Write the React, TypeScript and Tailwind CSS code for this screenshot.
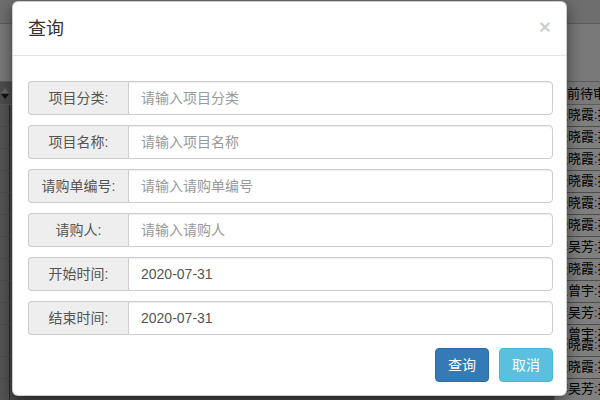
type BgRow = { lines: string[]; h: number };

const tableRows: BgRow[] = [
  { lines: ["张晓霞:提交"], h: 22 },
  { lines: ["张晓霞:提交"], h: 22 },
  { lines: ["张晓霞:提交"], h: 22 },
  { lines: ["张晓霞:提交"], h: 22 },
  { lines: ["张晓霞:提交"], h: 22 },
  { lines: ["张晓霞:提交"], h: 22 },
  { lines: ["李吴芳:提交"], h: 22 },
  { lines: ["张晓霞:提交"], h: 22 },
  { lines: ["王曾宇:提交"], h: 22 },
  { lines: ["李吴芳:提交"], h: 22 },
  { lines: ["王曾宇:提交", "张晓霞:提交"], h: 32 },
  { lines: ["张晓霞:提交"], h: 22 },
  { lines: ["李吴芳:提交"], h: 22 },
];

const fields = [
  { label: "项目分类:", placeholder: "请输入项目分类", value: "" },
  { label: "项目名称:", placeholder: "请输入项目名称", value: "" },
  { label: "请购单编号:", placeholder: "请输入请购单编号", value: "" },
  { label: "请购人:", placeholder: "请输入请购人", value: "" },
  { label: "开始时间:", placeholder: "", value: "2020-07-31" },
  { label: "结束时间:", placeholder: "", value: "2020-07-31" },
];

function CellText({ text }: { text: string }) {
  const [name, rest] = text.split(":");
  return (
    <span className="whitespace-nowrap">
      {name}
      <span className="text-[#c00000]">:</span>
      {rest}
    </span>
  );
}

function BackgroundPage() {
  return (
    <div className="flex h-full w-full flex-col bg-white text-[13px] text-black">
      <div className="h-[24px] shrink-0 border-b border-[#bbbbbb] bg-[#dcdcdc]" />
      <div className="h-[57px] shrink-0 bg-[#f3f3f3]" />

      {/* table under the modal */}
      <div className="flex h-[24px] shrink-0 border-y border-[#b5b5b5] bg-[#f5f5f5]">
        <div className="flex w-[10px] flex-col items-center justify-center gap-[1px] bg-[#9a9a9a]">
          <svg width="8" height="5" viewBox="0 0 8 5" aria-hidden="true">
            <path d="M4 0 8 5H0z" fill="#d0d0d0" />
          </svg>
          <svg width="8" height="5" viewBox="0 0 8 5" aria-hidden="true">
            <path d="M0 0h8L4 5z" fill="#222" />
          </svg>
        </div>
        <div className="flex-1 bg-[#a0a0a0]" />
        <div className="flex w-[46px] items-center overflow-hidden leading-none">
          <span className="whitespace-nowrap">当前待审批</span>
        </div>
      </div>

      {tableRows.map((row, i) => (
        <div key={i} className="flex shrink-0 border-b border-[#9a9a9a]" style={{ height: row.h }}>
          <div className="w-[10px] border-r border-[#555555] bg-[#a8a8a8]" />
          <div className="flex-1 bg-[#969696]" />
          <div className="flex w-[46px] flex-col justify-center overflow-hidden border-l border-[#cccccc] pb-[3px] leading-[11px]">
            {row.lines.map((l, j) => (
              <CellText key={j} text={l} />
            ))}
          </div>
        </div>
      ))}
    </div>
  );
}

function QueryModal() {
  return (
    <div className="absolute left-[12px] top-[1px] flex w-[555px] flex-col rounded-[6px] border border-black/20 bg-white shadow-[0_5px_15px_rgba(0,0,0,0.5)]">
      <div className="flex h-[54px] items-center border-b border-[#e5e5e5] px-[15px]">
        <h4 className="text-[18px] leading-none text-[#333333]">查询</h4>
        <button type="button" className="ml-auto pb-[4px] text-[21px] font-bold leading-none text-black/20">
          ×
        </button>
      </div>

      <div className="flex flex-col gap-[10px] pl-[15px] pr-[13px] pt-[25px]">
        {fields.map((f) => (
          <div key={f.label} className="flex h-[34px]">
            <span className="flex w-[100px] shrink-0 items-center justify-center rounded-l-[4px] border border-r-0 border-[#cccccc] bg-[#eeeeee] text-[14px] text-[#555555]">
              {f.label}
            </span>
            <input
              readOnly
              placeholder={f.placeholder}
              defaultValue={f.value}
              className="min-w-0 flex-1 rounded-r-[4px] border border-[#cccccc] px-[12px] text-[14px] text-[#555555] shadow-[inset_0_1px_1px_rgba(0,0,0,0.075)] outline-none placeholder:text-[#999999]"
            />
          </div>
        ))}
      </div>

      <div className="flex justify-end gap-[10px] pb-[13px] pl-[15px] pr-[13px] pt-[13px]">
        <button type="button" className="h-[34px] w-[54px] rounded-[4px] border border-[#2e6da4] bg-[#337ab7] text-[14px] text-white">
          查询
        </button>
        <button type="button" className="h-[34px] w-[54px] rounded-[4px] border border-[#46b8da] bg-[#5bc0de] text-[14px] text-white">
          取消
        </button>
      </div>
    </div>
  );
}

export default function App() {
  return (
    <div className="relative h-[400px] w-[600px] overflow-hidden font-['Liberation_Sans','Noto_Sans_CJK_SC',sans-serif]">
      <BackgroundPage />
      <div className="absolute inset-0 bg-black/50" />
      <QueryModal />
    </div>
  );
}
